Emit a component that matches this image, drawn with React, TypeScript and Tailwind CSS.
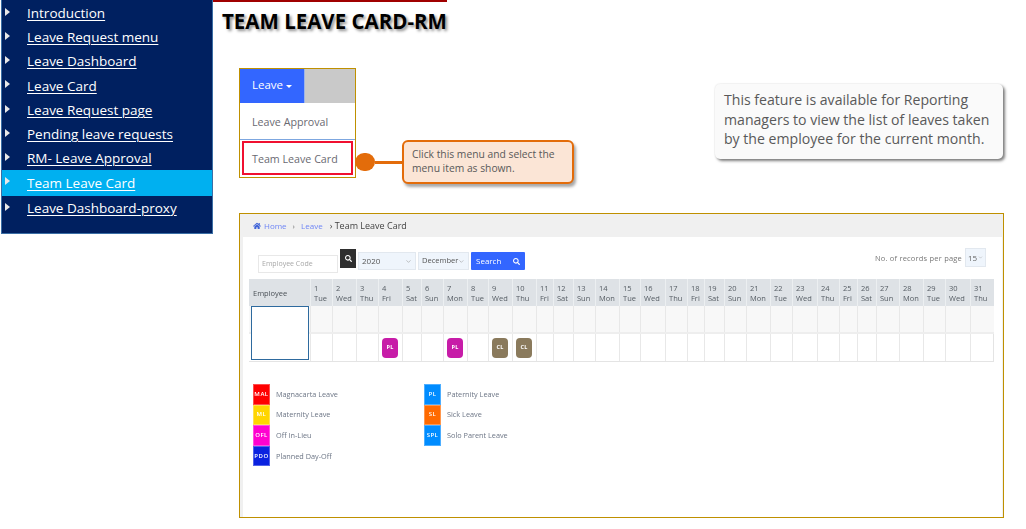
import { FaHome, FaSearch } from "react-icons/fa";
import { ChevronDown } from "lucide-react";

const nav = ["Introduction","Leave Request menu","Leave Dashboard","Leave Card","Leave Request page","Pending leave requests","RM- Leave Approval","Team Leave Card","Leave Dashboard-proxy"];
const rowH = ["h-[24px]","h-[24px]","h-[24px]","h-[25px]","h-[24px]","h-[24px]","h-[24px]","h-[26px]","h-[23px]"];
const dn = ["Tue","Wed","Thu","Fri","Sat","Sun","Mon"];
const days = Array.from({ length: 31 }, (_, i) => ({ d: i + 1, n: dn[i % 7] }));
const badges: Record<number, [string, string]> = { 4: ["PL","bg-[#c71ca8]"], 7: ["PL","bg-[#c71ca8]"], 9: ["CL","bg-[#8a7a5c]"], 10: ["CL","bg-[#8a7a5c]"] };
const gridCols = "grid grid-cols-[61px_22px_24px_22px_24px_19px_22px_24px_21px_24px_24px_17px_20px_22px_24px_21px_25px_22px_17px_20px_22px_24px_22px_25px_22px_18px_19px_23px_24px_22px_25px_24px]";
const legendA = [["MAL","bg-[#ff0000]","Magnacarta Leave"],["ML","bg-[#ffd500]","Maternity Leave"],["OFL","bg-[#ff00d0]","Off In-Lieu"],["PDO","bg-[#0a22e0]","Planned Day-Off"]];
const legendB = [["PL","bg-[#008cff]","Paternity Leave"],["SL","bg-[#ff6a00]","Sick Leave"],["SPL","bg-[#008cff]","Solo Parent Leave"]];

function Legend({ items }: { items: string[][] }) {
  return (
    <div className="flex flex-col">
      {items.map(([c, bg, l]) => (
        <div key={c} className="flex items-center h-[20.6px]">
          <div className={`w-[17px] h-[20.6px] ${bg} border border-white/30 flex items-center justify-center text-white text-[6px] font-semibold tracking-[0.5px]`}>{c}</div>
          <span className="ml-[6px] text-[7.3px] text-[#6c7585]">{l}</span>
        </div>
      ))}
    </div>
  );
}

export default function App() {
  return (
    <div className="w-[1026px] h-[529px] overflow-hidden bg-white flex font-['Open_Sans',sans-serif]">
      <aside className="w-[212px] h-[234px] ml-[1px] bg-[#002060] border-l border-r border-b border-[#3a6ea5] shrink-0 pt-[1px] flex flex-col">
        {nav.map((t, i) => (
          <div key={t} className={`${rowH[i]} flex items-center relative ${i === 7 ? "bg-[#00b0f0]" : ""}`}>
            <svg width="5" height="8" viewBox="0 0 5 8" className="absolute left-[3px] top-[7px]"><polygon points="0,0 5,4 0,8" fill="#e8e8e8" /></svg>
            <a className="ml-[25px] mt-[2px] text-white underline underline-offset-2 decoration-1 text-[13.5px] leading-none">{t}</a>
          </div>
        ))}
      </aside>
      <main className="flex-1 flex flex-col">
        <div className="h-[68px] shrink-0">
          <div className="w-[234px] h-[2px] bg-[#a00000]" />
          <h1 className="ml-[9px] mt-[6px] text-[20.5px] leading-[26px] font-bold text-black [text-shadow:2px_2px_3px_rgba(0,0,0,0.45)]">TEAM LEAVE CARD-RM</h1>
        </div>
        <div className="flex items-start pl-[26px] h-[145px] shrink-0">
          <div className="w-[117px] h-[110px] border border-[#bf9000] flex flex-col shrink-0">
            <div className="flex h-[34px] shrink-0">
              <div className="w-[64px] bg-[#3366ff] text-white text-[11.5px] flex items-center pl-[12px] pb-[2px] gap-[3px]">Leave<span className="w-0 h-0 mt-[2px] border-l-[3px] border-r-[3px] border-t-[3px] border-l-transparent border-r-transparent border-t-white" /></div>
              <div className="flex-1 bg-[#c9c9c9] border-l border-[#9db4e8]" />
            </div>
            <div className="h-[37px] shrink-0 border-b border-[#7da7e0] flex items-center pl-[12px] pt-[3px] text-[10.7px] text-[#6a6a72]">Leave Approval</div>
            <div className="mx-[2px] mt-[1px] h-[34px] border-2 border-[#f01030] flex items-center pl-[8px] pt-[2px] text-[10.7px] text-[#6a6a72]">Team Leave Card</div>
          </div>
          <div className="flex items-center mt-[72px] -ml-[1px] shrink-0">
            <div className="w-[20px] h-[18px] rounded-full bg-[#e36c0a]" />
            <div className="w-[27px] h-[3px] bg-[#e36c0a]" />
            <div className="w-[172px] h-[44px] rounded-[6px] bg-[#fbe5d6] border-2 border-[#e36c0a] shadow-[2px_3px_3px_rgba(0,0,0,0.35)] pl-[8px] pt-[5px] text-[10.3px] leading-[14px] text-[#595959]">Click this menu and select the<br />menu item as shown.</div>
          </div>
          <div className="ml-[141px] mt-[16px] w-[288px] h-[75px] shrink-0 rounded-[5px] bg-[#fafafa] shadow-[2px_2px_3px_rgba(0,0,0,0.5),0_0_2px_rgba(0,0,0,0.12)] pl-[9px] pt-[6px] text-[14.1px] leading-[19.5px] text-[#595959] whitespace-nowrap">This feature is available for Reporting<br />managers to view the list of leaves taken<br />by the employee for the current month.</div>
        </div>
        <section className="ml-[26px] w-[765px] h-[305px] border border-[#bf9000] shrink-0">
          <div className="w-full h-full bg-[#f0f0f0] flex flex-col blur-[0.4px]">
            <div className="h-[23px] shrink-0 flex items-center pl-[13px] text-[8px] text-[#6f86f5]">
              <FaHome className="w-[8px] h-[8px] mr-[3px] text-[#3f63d8]" />Home<span className="mx-[6px] text-[#777]">›</span>Leave<span className="ml-[7px] text-[9px] text-[#444]">› Team Leave Card</span>
            </div>
            <div className="flex-1 ml-[3px] mr-[1px] bg-white flex flex-col">
              <div className="h-[42px] shrink-0 flex items-start pl-[15px] pr-[16px]">
                <div className="mt-[18px] w-[80px] h-[18px] border border-[#e8e8e8] flex items-center pl-[3px] text-[7px] text-[#a8a8a8]">Employee Code</div>
                <div className="mt-[12px] ml-[2px] w-[16px] h-[19px] bg-[#2f2f2f] flex items-center justify-center"><FaSearch className="w-[7px] h-[7px] text-white" /></div>
                <div className="mt-[15px] ml-[2px] w-[58px] h-[18px] bg-[#eff5fc] border border-[#e2e8ef] flex items-center justify-between px-[3px] text-[8px] text-[#555]">2020<ChevronDown className="w-[7px] h-[7px] text-[#999]" /></div>
                <div className="mt-[15px] ml-[2px] w-[51px] h-[18px] bg-[#eff5fc] border border-[#e2e8ef] flex items-center justify-between px-[3px] text-[7.5px] text-[#555]">December<ChevronDown className="w-[7px] h-[7px] text-[#999]" /></div>
                <div className="mt-[15px] ml-[2px] w-[54px] h-[18px] bg-[#3366ff] rounded-[1px] flex items-center justify-between pl-[5px] pr-[5px] text-[8px] text-white">Search<FaSearch className="w-[7px] h-[7px]" /></div>
                <div className="ml-auto mt-[15px] text-[7.5px] text-[#777] tracking-[0.2px] leading-[12px]">No. of records per page</div>
                <div className="mt-[11px] ml-[3px] w-[21px] h-[19px] bg-[#eff5fc] border border-[#e2e8ef] flex items-center justify-between px-[2px] text-[8px] text-[#666]">15<ChevronDown className="w-[5px] h-[5px] text-[#999]" /></div>
              </div>
              <div className="ml-[6px] w-[745px]">
                <div className={`${gridCols} h-[27px] bg-[#dee2e6] text-[7.5px] leading-[10px] text-[#555c63]`}>
                  <div className="flex items-center pl-[4px] text-[#4a5056]">Employee</div>
                  {days.map((x) => (
                    <div key={x.d} className="border-l border-[#eceff1] pl-[3px] pt-[4px]"><div>{x.d}</div><div>{x.n}</div></div>
                  ))}
                </div>
                <div className="relative">
                  <div className={`${gridCols} h-[28px] bg-[#f8f8f8] border-b-2 border-[#eeeeee]`}>
                    <div />
                    {days.map((x) => <div key={x.d} className="border-l border-[#e8e8e8]" />)}
                  </div>
                  <div className={`${gridCols} h-[28px] border-b border-[#e4e4e4] border-r`}>
                    <div />
                    {days.map((x) => {
                      const b = badges[x.d];
                      return (
                        <div key={x.d} className="border-l border-[#e8e8e8] flex items-center justify-center pr-[1px]">
                          {b && <div className={`w-[16px] h-[20px] rounded-[4px] ${b[1]} text-white text-[5.5px] font-bold flex items-center justify-center tracking-[0.3px]`}>{b[0]}</div>}
                        </div>
                      );
                    })}
                  </div>
                  <div className="absolute left-[2px] top-0 w-[58px] h-[54px] bg-white border border-[#2e6a9e]" />
                </div>
              </div>
              <div className="ml-[10px] mt-[22px] flex">
                <div className="w-[171px]"><Legend items={legendA} /></div>
                <Legend items={legendB} />
              </div>
            </div>
          </div>
        </section>
      </main>
    </div>
  );
}
